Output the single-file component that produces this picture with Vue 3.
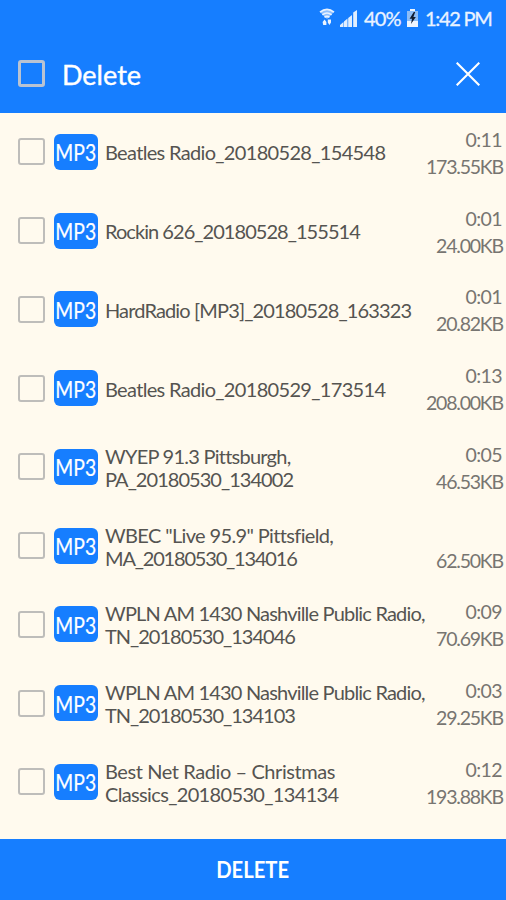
<template>
    <div class="screen">
        <header class="header">
            <div class="status-bar">
                <svg class="wifi" viewBox="0 0 16 18" width="16" height="18">
                    <path d="M1 4 Q8 -1.5 15 4 L8 11 Z" fill="#8fc0ff" />
                    <path d="M1 4.2 Q8 -1.5 15 4.2 M3.4 6.8 Q8 3.2 12.6 6.8 M5.5 9.2 Q8 7.4 10.5 9.2" fill="none" stroke="#eaf3ff" stroke-width="1.7" />
                    <path d="M3.6 14 L5.6 11.5 L7.4 14 V17 H4.2 Z M8.8 11.5 H12 V14.5 L10.4 17 L8.8 14.5 Z" fill="#eaf3ff" />
                </svg>
                <svg class="signal" viewBox="0 0 17 17" width="17" height="17">
                    <path d="M0 17 V15 L3.5 12 V17 Z M4 17 V11.5 L7.5 8.5 V17 Z M8.2 17 V8 L12 5 V17 Z M13.2 17 V2.5 L17 0 V17 Z" fill="#e0eeff" />
                </svg>
                <span class="battery-text">40%</span>
                <svg class="battery" viewBox="0 0 11 18" width="11" height="18">
                    <path d="M3 0 H8 V2 H11 V18 H0 V2 H3 Z" fill="#eef5ff" />
                    <path d="M0 2 H11 V12 H0 Z" fill="#8dbcf5" />
                    <path d="M6.8 3 L2.6 9.8 H5 L4 15 L8.8 8 H6.4 L8.2 3 Z" fill="#101c30" />
                </svg>
                <span class="clock">1:42 PM</span>
            </div>
            <div class="title-bar">
                <span class="checkbox"></span>
                <h1 class="title">Delete</h1>
                <svg class="close" viewBox="0 0 24 24" width="24" height="24">
                    <path d="M0.7 0.7 L23.3 23.3 M23.3 0.7 L0.7 23.3" stroke="#fff" stroke-width="2.1" />
                </svg>
            </div>
        </header>

        <ul class="list">
            <li v-for="(item, i) in recordings" :key="i" class="row">
                <span class="checkbox"></span>
                <span class="badge"><span class="badge-text">MP3</span></span>
                <div class="name">
                    <span v-for="line in item.lines" :key="line.text" class="line"
                        :style="{ letterSpacing: line.spacing + 'px' }">{{ line.text }}</span>
                </div>
                <div class="meta">
                    <span class="time">{{ item.time }}</span>
                    <span class="size">{{ item.size }}</span>
                </div>
            </li>
        </ul>

        <button type="button" class="delete-button"><span class="delete-text">DELETE</span></button>
    </div>
</template>

<script setup>
import { ref } from "vue";

const recordings = ref([
    { lines: [{ text: "Beatles Radio_20180528_154548", spacing: -0.67 }], time: "0:11", size: "173.55KB" },
    { lines: [{ text: "Rockin 626_20180528_155514", spacing: -0.95 }], time: "0:01", size: "24.00KB" },
    { lines: [{ text: "HardRadio [MP3]_20180528_163323", spacing: -0.86 }], time: "0:01", size: "20.82KB" },
    { lines: [{ text: "Beatles Radio_20180529_173514", spacing: -0.67 }], time: "0:13", size: "208.00KB" },
    {
        lines: [{ text: "WYEP 91.3 Pittsburgh,", spacing: -0.75 }, { text: "PA_20180530_134002", spacing: -0.96 }],
        time: "0:05", size: "46.53KB",
    },
    {
        lines: [{ text: 'WBEC "Live 95.9" Pittsfield,', spacing: -0.64 }, { text: "MA_20180530_134016", spacing: -1.18 }],
        time: "", size: "62.50KB",
    },
    {
        lines: [{ text: "WPLN AM 1430 Nashville Public Radio,", spacing: -0.81 }, { text: "TN_20180530_134046", spacing: -1 }],
        time: "0:09", size: "70.69KB",
    },
    {
        lines: [{ text: "WPLN AM 1430 Nashville Public Radio,", spacing: -0.81 }, { text: "TN_20180530_134103", spacing: -1 }],
        time: "0:03", size: "29.25KB",
    },
    {
        lines: [{ text: "Best Net Radio – Christmas", spacing: -0.42 }, { text: "Classics_20180530_134134", spacing: -0.65 }],
        time: "0:12", size: "193.88KB",
    },
]);
</script>

<style>
body {
    margin: 0;
}
</style>

<style scoped>
.screen {
    display: flex;
    flex-direction: column;
    width: 506px;
    height: 900px;
    overflow: hidden;
    background: #fffaee;
    font-family: Lato, "Liberation Sans", sans-serif;
}

.header {
    height: 112.5px;
    flex: none;
    background: #167eff;
    color: #fff;
}

.status-bar {
    display: flex;
    align-items: center;
    height: 36px;
    box-sizing: border-box;
    padding-left: 319px;
    font-size: 20px;
    line-height: 24px;
    white-space: nowrap;
    color: #eaf3ff;
    -webkit-text-stroke: 0.3px #eaf3ff;
}

.wifi {
    margin-top: -2px;
}

.signal {
    margin-left: 5px;
}

.battery-text {
    margin-left: 7px;
    width: 37px;
    letter-spacing: -0.8px;
}

.battery {
    margin-left: 6px;
}

.clock {
    margin-left: 7px;
    letter-spacing: -1.3px;
}

.title-bar {
    display: flex;
    align-items: center;
    height: 75px;
    padding: 0 26px 0 18px;
}

.checkbox {
    width: 27px;
    height: 27px;
    box-sizing: border-box;
    flex: none;
    border: 2px solid #bebdba;
    border-radius: 3px;
}

.title-bar .checkbox {
    border: 3px solid #b9c3d2;
}

.title {
    flex: 1;
    margin: 2px 0 0 17px;
    font-size: 27px;
    font-weight: 400;
    line-height: 32px;
    -webkit-text-stroke: 0.4px #fff;
}

.list {
    flex: 1;
    margin: 0;
    padding: 0;
    list-style: none;
}

.row {
    display: flex;
    align-items: center;
    height: 78.75px;
    padding: 0 4px 0 18px;
}

.badge {
    display: flex;
    align-items: center;
    justify-content: center;
    width: 44px;
    height: 36px;
    margin-left: 9px;
    flex: none;
    border-radius: 6px;
    background: #167eff;
    color: #fff;
    font-size: 22.5px;
}

.badge-text {
    margin-top: 2px;
    transform: scaleX(0.86);
    -webkit-text-stroke: 0.2px #fff;
}

.name {
    display: flex;
    flex-direction: column;
    flex: 1;
    min-width: 0;
    margin: 2px 0 0 7px;
    font-size: 20px;
    line-height: 23px;
    white-space: nowrap;
    color: #555451;
}

.meta {
    display: flex;
    flex-direction: column;
    align-items: flex-end;
    margin-top: 2px;
    font-size: 19.5px;
    line-height: 27px;
    letter-spacing: -1.3px;
    color: #777571;
}

.time {
    height: 27px;
    letter-spacing: -0.6px;
}

.size {
    margin-right: -1px;
    letter-spacing: -1.2px;
}

.delete-button {
    height: 61px;
    flex: none;
    border: none;
    background: #167eff;
    color: #fff;
    font-family: inherit;
    font-size: 22px;
    font-weight: 700;
}

.delete-text {
    display: inline-block;
    transform: scaleX(0.92);
}
</style>
